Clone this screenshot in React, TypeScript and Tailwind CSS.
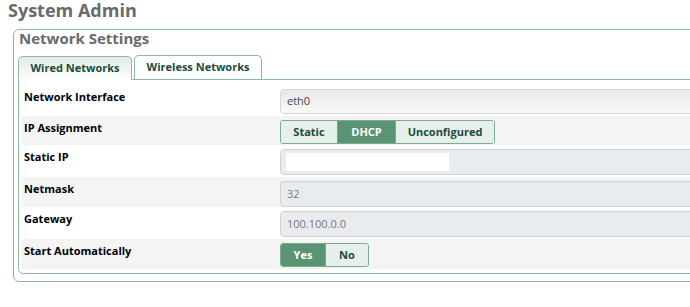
const rows = [
  { label: 'Network Interface', kind: 'select', h: 'h-[31px]' },
  { label: 'IP Assignment', kind: 'ipmode', h: 'h-[29px]' },
  { label: 'Static IP', kind: 'static', h: 'h-[32px]' },
  { label: 'Netmask', kind: 'text', value: '32', h: 'h-[30px]' },
  { label: 'Gateway', kind: 'text', value: '100.100.0.0', h: 'h-[32px]' },
  { label: 'Start Automatically', kind: 'yesno', h: 'h-[30px]' },
]

function Segmented({ items, active }: { items: { label: string; w: string }[]; active: number }) {
  return (
    <div className="flex h-[24px] overflow-hidden rounded-[3px] border border-[#7aab8d]">
      {items.map((it, i) => (
        <div
          key={it.label}
          className={
            'flex items-center justify-center text-[11px] font-bold ' +
            it.w +
            (i > 0 ? ' border-l border-[#7aab8d]' : '') +
            (i === active ? ' bg-[#5a9474] text-white' : ' bg-[#e6efe9] text-[#1b4a3e]')
          }
        >
          {it.label}
        </div>
      ))}
    </div>
  )
}

function Control({ kind, value }: { kind: string; value?: string }) {
  if (kind === 'select') {
    return (
      <div className="flex h-[25px] w-[440px] items-center rounded-[4px] border border-[#d6d6d6] bg-gradient-to-b from-[#e9e9e9] to-[#f9f9f9] pl-[6px] text-[11px] text-[#444]">
        eth0
      </div>
    )
  }
  if (kind === 'ipmode') {
    return (
      <Segmented
        active={1}
        items={[
          { label: 'Static', w: 'w-[56px]' },
          { label: 'DHCP', w: 'w-[58px]' },
          { label: 'Unconfigured', w: 'w-[99px]' },
        ]}
      />
    )
  }
  if (kind === 'yesno') {
    return (
      <Segmented
        active={0}
        items={[
          { label: 'Yes', w: 'w-[44px]' },
          { label: 'No', w: 'w-[43px]' },
        ]}
      />
    )
  }
  if (kind === 'static') {
    return (
      <div className="flex h-[26px] w-[440px] items-center rounded-[4px] border border-[#d0d3d6] bg-[#e9ecef] pl-[5px]">
        <div className="h-[18px] w-[163px] bg-white" />
      </div>
    )
  }
  return (
    <div className="flex h-[26px] w-[440px] items-center rounded-[4px] border border-[#d0d3d6] bg-[#e9ecef] pl-[6px] text-[11px] text-[#777]">
      {value}
    </div>
  )
}

export default function App() {
  return (
    <div className="h-[307px] w-[690px] overflow-hidden bg-white font-['Open_Sans',sans-serif]">
      <h1 className="pl-[8px] text-[18px] font-bold leading-[20px] text-[#6a6a6a]">System Admin</h1>
      <div className="ml-[13px] mt-[9px] w-[720px] rounded-[6px] border border-[#8dbb9d] pb-[7px] pl-[4px]">
        <h2 className="pl-[1px] text-[15px] font-bold leading-[16px] text-[#6a6a6a]">Network Settings</h2>
        <div className="flex items-end pt-[9px]">
          <div className="relative z-10 -mb-px flex h-[24px] w-[114px] items-center justify-center rounded-t-[5px] border border-b-0 border-[#8dbb9d] bg-gradient-to-b from-[#e1ebe4] to-white text-[11px] font-bold text-[#1b4a3e]">
            Wired Networks
          </div>
          <div className="ml-[2px] flex h-[24px] w-[128px] items-center justify-center rounded-t-[5px] border border-b-0 border-[#8dbb9d] bg-white text-[11px] font-bold text-[#1b4a3e]">
            Wireless Networks
          </div>
        </div>
        <div className="rounded-b-[5px] border border-[#8dbb9d] px-[3px] pb-[4px] pt-[5px]">
          {rows.map((r, i) => (
            <div
              key={r.label}
              className={'flex items-start pt-[4px] ' + r.h + (i % 2 === 1 ? ' bg-[#f4f4f4]' : ' bg-white')}
            >
              <div className="w-[258px] pl-[2px] text-[11px] font-bold leading-[15px] text-black">{r.label}</div>
              <Control kind={r.kind} value={r.value} />
            </div>
          ))}
        </div>
      </div>
    </div>
  )
}
